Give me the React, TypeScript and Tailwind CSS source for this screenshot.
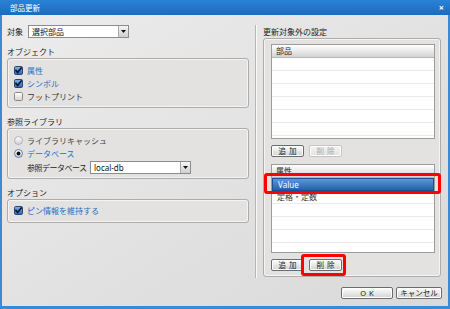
import React from "react";

function CheckBox({ checked, id }: { checked: boolean; id: string }) {
  if (checked) {
    return (
      <svg width="9" height="9" viewBox="0 0 9 9" className="shrink-0">
        <defs>
          <linearGradient id={id} x1="0" y1="0" x2="0" y2="1">
            <stop offset="0" stopColor="#7fb3ea" />
            <stop offset="1" stopColor="#2466b8" />
          </linearGradient>
        </defs>
        <rect x="0.5" y="0.5" width="8" height="8" rx="1.2" fill={`url(#${id})`} stroke="#27477a" />
        <path d="M1.9 4.4 L3.7 6.4 L7.2 1.9" stroke="#0a1630" strokeWidth="1.7" fill="none" strokeLinecap="round" />
      </svg>
    );
  }
  return (
    <svg width="9" height="9" viewBox="0 0 9 9" className="shrink-0">
      <defs>
        <linearGradient id={id} x1="0" y1="0" x2="0" y2="1">
          <stop offset="0" stopColor="#ffffff" />
          <stop offset="1" stopColor="#d4d4d4" />
        </linearGradient>
      </defs>
      <rect x="0.5" y="0.5" width="8" height="8" rx="1.2" fill={`url(#${id})`} stroke="#8a8a8a" />
    </svg>
  );
}

function Radio({ selected, id }: { selected: boolean; id: string }) {
  return (
    <svg width="9" height="9" viewBox="0 0 9 9" className="shrink-0">
      <defs>
        <linearGradient id={id} x1="0" y1="0" x2="0" y2="1">
          <stop offset="0" stopColor="#ffffff" />
          <stop offset="1" stopColor="#d0d0d0" />
        </linearGradient>
      </defs>
      <circle cx="4.5" cy="4.5" r="4" fill={`url(#${id})`} stroke={selected ? "#5a7fae" : "#b0b0b0"} />
      {selected && <circle cx="4.5" cy="4.5" r="1.9" fill="#111" />}
    </svg>
  );
}

function Combo({ width, text }: { width: string; text: string }) {
  return (
    <div className={`${width} h-[13px] shrink-0 border border-[#8c8c8c] bg-white flex`}>
      <div className="flex-1 pl-[3px] text-[8px] leading-[11px] text-[#111] truncate">{text}</div>
      <div className="w-[10px] border-l border-[#a8a8a8] bg-gradient-to-b from-[#f6f6f6] to-[#cfcfcf] flex items-center justify-center">
        <svg width="5" height="3" viewBox="0 0 5 3">
          <path d="M0 0 H5 L2.5 3 Z" fill="#111" />
        </svg>
      </div>
    </div>
  );
}

function Btn({ a, b, disabled, w = "w-[33px]" }: { a: string; b?: string; disabled?: boolean; w?: string }) {
  return (
    <div
      className={`${w} h-[12px] rounded-[2px] border flex items-center justify-center gap-[3px] text-[7.5px] leading-[10px] shadow-[inset_0_0_0_1px_#ffffff] ${
        disabled
          ? "border-[#c4c4c4] text-[#a8a8a8] bg-gradient-to-b from-[#f4f4f4] to-[#e2e2e2]"
          : "border-[#6c6c6c] text-[#222] bg-gradient-to-b from-white to-[#d2d2d2]"
      }`}
    >
      <span>{a}</span>
      {b && <span>{b}</span>}
    </div>
  );
}

function Row({ children, selected }: { children?: React.ReactNode; selected?: boolean }) {
  return (
    <div
      className={`h-[13px] shrink-0 pl-[5px] text-[8px] leading-[12px] ${
        selected
          ? "bg-gradient-to-b from-[#5b97dc] to-[#2560b0] text-white border border-[#1d4f93]"
          : "border-b border-[#ebebeb] text-[#333]"
      }`}
    >
      {children}
    </div>
  );
}

function GroupLabel({ children }: { children: React.ReactNode }) {
  return <div className="mt-[7px] h-[13px] text-[8px] leading-[13px] text-[#222]">{children}</div>;
}

export default function App() {
  return (
    <div className="relative w-[450px] h-[309px] flex flex-col font-['Noto_Sans','Noto_Sans_CJK_JP',sans-serif] overflow-hidden">
      {/* title bar */}
      <div className="h-[15px] shrink-0 bg-gradient-to-b from-[#2a82d6] to-[#1a6cc0] flex items-center justify-between pl-[10px] pr-[6px]">
        <span className="text-[7.5px] leading-[10px] text-white">部品更新</span>
        <span className="text-[9px] leading-[10px] font-bold text-white">×</span>
      </div>

      {/* body */}
      <div className="flex-1 flex flex-col border-l-2 border-r-2 border-b-[3px] border-[#3a8ad8] bg-gradient-to-br from-[#ececec] to-[#d9d9d9] pl-[5px] pr-[5px]">
        <div className="flex pt-[10px]">
          {/* left column */}
          <div className="w-[242px] flex flex-col">
            <div className="h-[13px] flex items-center gap-[5px]">
              <span className="text-[8px] leading-[13px] text-[#222]">対象</span>
              <Combo width="w-[101px]" text="選択部品" />
            </div>

            <GroupLabel>オブジェクト</GroupLabel>
            <div className="h-[50px] rounded-[3px] border border-[#acacac] bg-[#e4e2e0] shadow-[inset_0_0_0_1px_#f4f4f4] pt-[5px] pl-[6px] flex flex-col">
              <div className="h-[13px] flex items-center gap-[4px]">
                <CheckBox checked id="c1" />
                <span className="text-[8px] text-[#1f6fc6]">属性</span>
              </div>
              <div className="h-[13px] flex items-center gap-[4px]">
                <CheckBox checked id="c2" />
                <span className="text-[8px] text-[#1f6fc6]">シンボル</span>
              </div>
              <div className="h-[13px] flex items-center gap-[4px]">
                <CheckBox checked={false} id="c3" />
                <span className="text-[8px] text-[#333]">フットプリント</span>
              </div>
            </div>

            <GroupLabel>参照ライブラリ</GroupLabel>
            <div className="h-[51px] rounded-[3px] border border-[#acacac] bg-[#e4e2e0] shadow-[inset_0_0_0_1px_#f4f4f4] pt-[5px] pl-[6px] flex flex-col">
              <div className="h-[13px] flex items-center gap-[4px]">
                <Radio selected={false} id="r1" />
                <span className="text-[8px] text-[#444]">ライブラリキャッシュ</span>
              </div>
              <div className="h-[13px] flex items-center gap-[4px]">
                <Radio selected id="r2" />
                <span className="text-[8px] text-[#1f6fc6]">データベース</span>
              </div>
              <div className="mt-[1px] h-[13px] flex items-center pl-[13px]">
                <span className="w-[63px] shrink-0 whitespace-nowrap text-[8px] tracking-[-0.5px] text-[#222]">参照データベース</span>
                <Combo width="w-[101px]" text="local-db" />
              </div>
            </div>

            <GroupLabel>オプション</GroupLabel>
            <div className="h-[24px] rounded-[3px] border border-[#acacac] bg-[#e4e2e0] shadow-[inset_0_0_0_1px_#f4f4f4] pt-[4px] pl-[6px] flex flex-col">
              <div className="h-[13px] flex items-center gap-[4px]">
                <CheckBox checked id="c4" />
                <span className="text-[8px] text-[#1f6fc6]">ピン情報を維持する</span>
              </div>
            </div>
          </div>

          {/* separator */}
          <div className="ml-[6px] w-[2px] h-[253px] border-l border-[#b6b6b6] border-r border-r-[#f8f8f8]" />

          {/* right column */}
          <div className="ml-[6px] w-[178px] flex flex-col">
            <div className="h-[13px] text-[8px] leading-[13px] text-[#222]">更新対象外の設定</div>
            <div className="h-[239px] rounded-[3px] border border-[#acacac] bg-[#e4e2e0] shadow-[inset_0_0_0_1px_#f4f4f4] pt-[5px] pl-[7px] pr-[5px] flex flex-col">
              <div className="h-[95px] border border-[#9c9c9c] bg-white flex flex-col overflow-hidden">
                <div className="h-[13px] shrink-0 bg-gradient-to-b from-white to-[#d4d4d4] border-b border-[#b4b4b4] pl-[4px] text-[8px] leading-[12px] text-[#222]">
                  部品
                </div>
                <Row />
                <Row />
                <Row />
                <Row />
                <Row />
                <Row />
              </div>
              <div className="mt-[6px] flex gap-[5px]">
                <Btn a="追" b="加" />
                <Btn a="削" b="除" disabled />
              </div>
              <div className="mt-[7px] h-[89px] border border-[#9c9c9c] bg-white flex flex-col overflow-hidden">
                <div className="h-[13px] shrink-0 bg-gradient-to-b from-white to-[#d4d4d4] border-b border-[#b4b4b4] pl-[4px] text-[8px] leading-[12px] text-[#222]">
                  属性
                </div>
                <Row selected>Value</Row>
                <Row>定格・定数</Row>
                <Row />
                <Row />
                <Row />
                <Row />
              </div>
              <div className="mt-[6px] flex gap-[5px]">
                <Btn a="追" b="加" />
                <Btn a="削" b="除" />
              </div>
            </div>
          </div>
        </div>

        {/* bottom buttons */}
        <div className="mt-[9px] flex justify-end gap-[3px] pr-[1px]">
          <Btn a="O" b="K" w="w-[52px]" />
          <Btn a="キャンセル" w="w-[46px]" />
        </div>
      </div>

      {/* red highlight annotations */}
      <div className="absolute left-[264px] top-[173px] w-[177px] h-[21px] border-[3px] border-[#ff0000] rounded-[3px]" />
      <div className="absolute left-[301px] top-[254px] w-[45px] h-[22px] border-[3px] border-[#ff0000] rounded-[3px]" />
    </div>
  );
}
